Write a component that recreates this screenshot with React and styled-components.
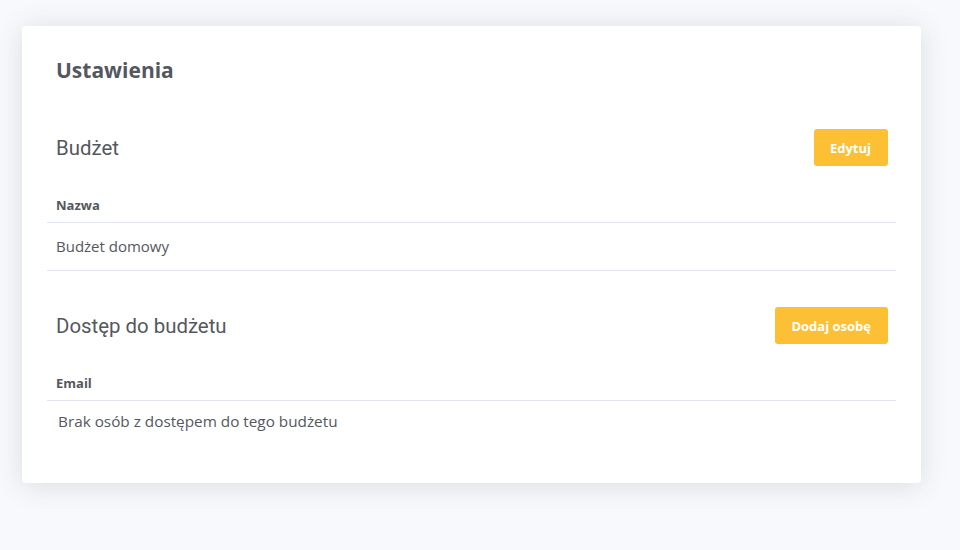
import React from 'react';
import styled, { createGlobalStyle } from 'styled-components';

const GlobalStyle = createGlobalStyle`
  html, body {
    margin: 0;
    padding: 0;
    background: #f8f9fc;
    font-family: "Open Sans", "Noto Sans", sans-serif;
    color: #5a5c69;
  }
`;

const Page = styled.div`
  min-height: 550px;
  padding: 26px 39px 0 22px;
  box-sizing: border-box;
`;

const Card = styled.div`
  background: #fff;
  border-radius: 4px;
  box-shadow: 0 0.15rem 1.75rem 0 rgba(58, 59, 69, 0.15);
  padding: 31px 25px 41px;
`;

const PageTitle = styled.h1`
  margin: 0 0 46px;
  padding: 0 9px;
  font-size: 21px;
  line-height: 26px;
  font-weight: 700;
  color: #55575f;
`;

const SectionHead = styled.div`
  display: flex;
  align-items: center;
  justify-content: space-between;
  padding: 0 8px 0 9px;
  margin-top: ${p => p.$gap || 0}px;
`;

const SectionTitle = styled.h2`
  margin: 0;
  font-family: Roboto, "Open Sans", sans-serif;
  font-size: 20.4px;
  font-weight: 400;
  color: #55575f;
`;

const Button = styled.button`
  height: 37px;
  padding: 0 17px 0 16px;
  border: none;
  border-radius: 3px;
  background: #fdbf33;
  color: #fff;
  font-family: "Open Sans", sans-serif;
  font-size: 13px;
  font-weight: 700;
  cursor: pointer;
`;

const Table = styled.table`
  width: 100%;
  margin-top: 22px;
  border-collapse: collapse;
`;

const Th = styled.th`
  text-align: left;
  padding: 7px 9px;
  font-size: 13px;
  line-height: 20px;
  font-weight: 700;
  color: #55575f;
  border-bottom: 1px solid #e3e6f0;
`;

const Td = styled.td`
  padding: 13px 9px;
  font-size: 15px;
  line-height: 21px;
  color: #55575f;
  border-bottom: 1px solid #e3e6f0;
`;

const Empty = styled.p`
  margin: 0;
  padding: 10px 11px;
  font-size: 15.3px;
  line-height: 21px;
  color: #55575f;
`;

export default function App() {
  return (
    <Page>
      <GlobalStyle />
      <Card>
        <PageTitle>Ustawienia</PageTitle>

        <SectionHead>
          <SectionTitle>Budżet</SectionTitle>
          <Button>Edytuj</Button>
        </SectionHead>
        <Table>
          <thead>
            <tr><Th>Nazwa</Th></tr>
          </thead>
          <tbody>
            <tr><Td>Budżet domowy</Td></tr>
          </tbody>
        </Table>

        <SectionHead $gap={36}>
          <SectionTitle>Dostęp do budżetu</SectionTitle>
          <Button>Dodaj osobę</Button>
        </SectionHead>
        <Table>
          <thead>
            <tr><Th>Email</Th></tr>
          </thead>
        </Table>
        <Empty>Brak osób z dostępem do tego budżetu</Empty>
      </Card>
    </Page>
  );
}
